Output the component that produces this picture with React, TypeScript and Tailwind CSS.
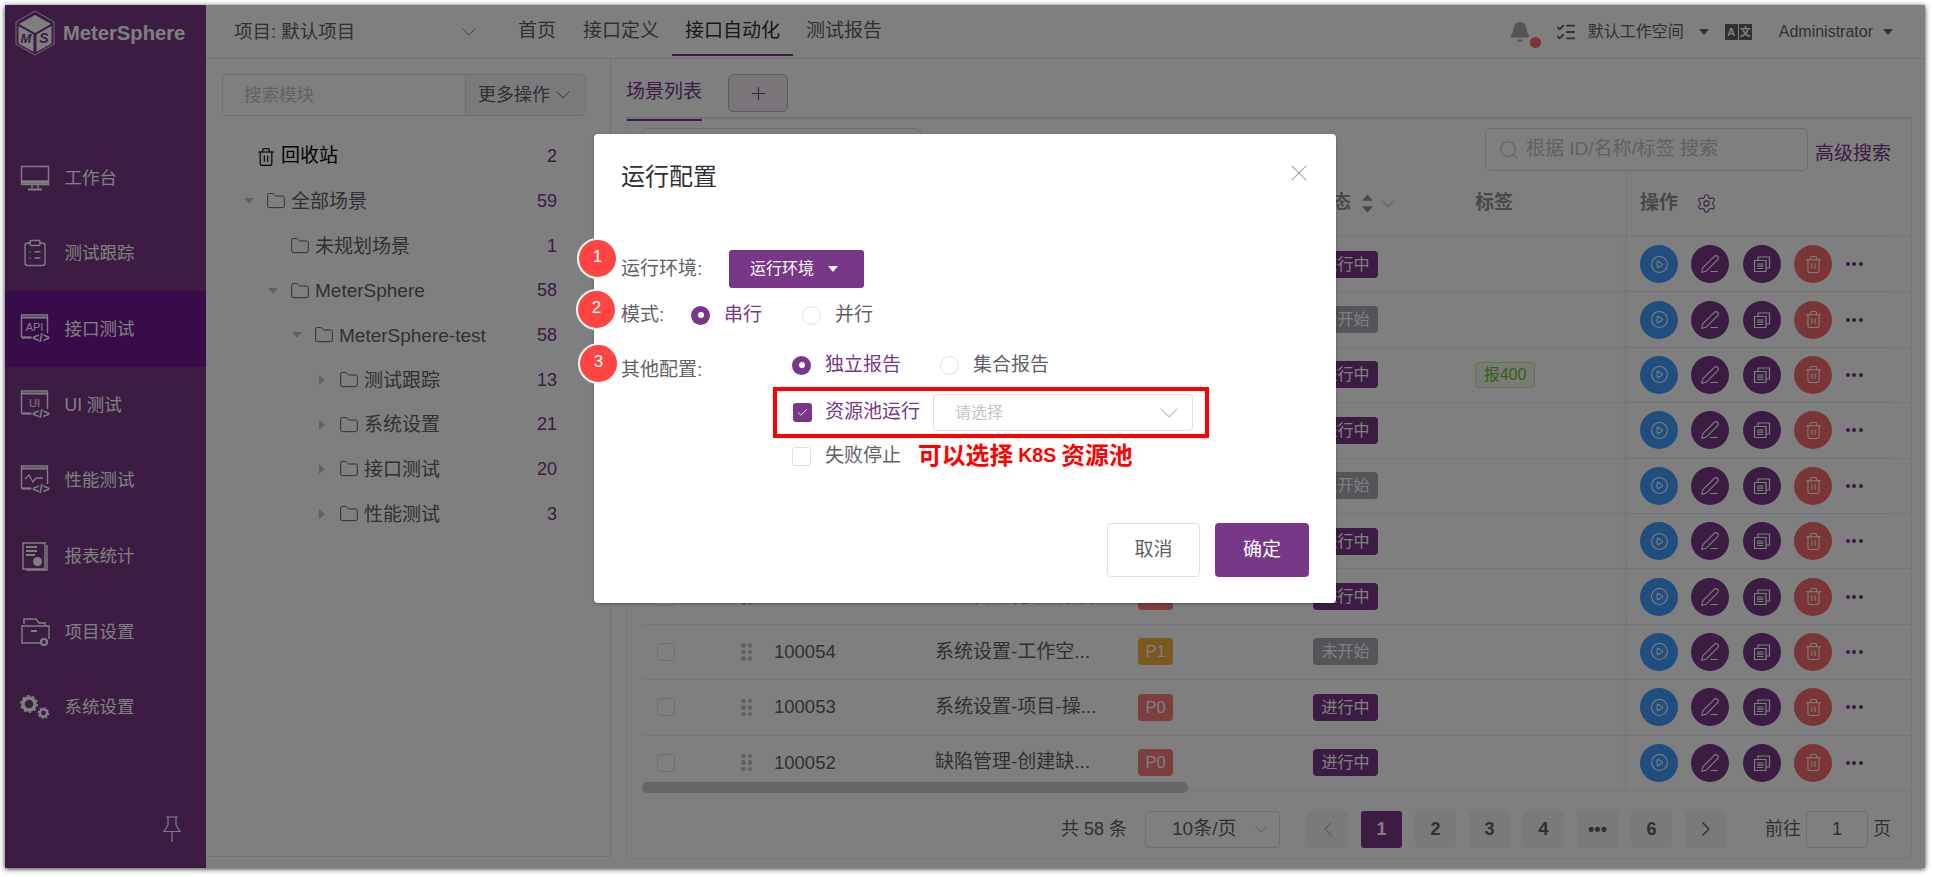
import React from 'react';
import {
  Bell, ChevronDown, ChevronLeft, ChevronRight, CirclePlay, ClipboardList, Folder,
  ListChecks, PenLine, Plus, Search, Settings, Trash2, X, Check,
} from 'lucide-react';

const Caret: React.FC<{ dir?: 'down' | 'right' | 'up'; className?: string }> = ({ dir = 'down', className }) => (
  <svg viewBox="0 0 12 12" className={className} fill="currentColor">
    {dir === 'down' && <path d="M1 3h10L6 9z" />}
    {dir === 'up' && <path d="M1 9h10L6 3z" />}
    {dir === 'right' && <path d="M3 1v10l6-5z" />}
  </svg>
);

const CodeIcon: React.FC<{ label?: string; children?: React.ReactNode }> = ({ label, children }) => (
  <svg viewBox="0 0 30 32" className="w-[30px] h-[32px] text-white" fill="none" stroke="currentColor" strokeWidth="1.4">
    <path d="M1.5 24V2h26v18" />
    <path d="M1.5 4.5h26" strokeWidth="2" />
    <path d="M1.5 24.5h10" strokeWidth="2.2" />
    {label && (
      <text x="14.5" y="17.5" textAnchor="middle" fontSize="11" fill="currentColor" stroke="none" fontFamily="Liberation Sans">{label}</text>
    )}
    {children}
    <text x="21" y="29" textAnchor="middle" fontSize="12" fontWeight="700" fill="currentColor" stroke="none" fontFamily="Liberation Sans">{'</>'}</text>
  </svg>
);

const MonitorIcon = () => (
  <svg viewBox="0 0 30 26" className="w-[30px] h-[26px] text-white" fill="none" stroke="currentColor" strokeWidth="1.4">
    <path d="M1.5 1.5h27v18h-27z" />
    <path d="M1.5 17h27" strokeWidth="3.4" />
    <path d="M12 20v3.5M18 20v3.5" />
    <path d="M8 24.5h14" strokeWidth="2" />
  </svg>
);

const ReportIcon = () => (
  <svg viewBox="0 0 30 30" className="w-[30px] h-[30px] text-white" fill="none" stroke="currentColor" strokeWidth="1.4">
    <path d="M3 2h22v26H3z" />
    <path d="M27 4v25H6" />
    <path d="M6 6h11M6 10h11M6 14h9" strokeWidth="1.8" />
    <circle cx="17.5" cy="20.5" r="4.5" fill="currentColor" stroke="none" />
  </svg>
);

const ProjectIcon = () => (
  <svg viewBox="0 0 30 30" className="w-[30px] h-[30px] text-white" fill="none" stroke="currentColor" strokeWidth="1.4">
    <path d="M4 7V2h12l3 4h6v3" />
    <path d="M22 26H2V9h27v13" />
    <path d="M11 14h6" strokeWidth="2" />
    <circle cx="24" cy="25" r="3" strokeWidth="2.2" />
  </svg>
);

const GearsIcon = () => (
  <svg viewBox="0 0 30 26" className="w-[30px] h-[26px] text-white" fill="none" stroke="currentColor">
    <circle cx="9" cy="10" r="6" strokeWidth="3.4" />
    <circle cx="9" cy="10" r="8.2" strokeWidth="1.6" strokeDasharray="2.6 2.6" />
    <circle cx="23.5" cy="19" r="3.6" strokeWidth="2.4" />
    <circle cx="23.5" cy="19" r="5.2" strokeWidth="1.4" strokeDasharray="2 2" />
  </svg>
);

const PinIcon = () => (
  <svg viewBox="0 0 18 26" className="w-[18px] h-[26px] text-white" fill="none" stroke="currentColor" strokeWidth="1.2">
    <path d="M3 1h12M5 1l-1 0M5 1v8L1 15.5h16L13 9V1" />
    <path d="M9 15.5V26" />
  </svg>
);

const CopyIcon = () => (
  <svg viewBox="0 0 18 18" className="w-[18px] h-[18px]" fill="none" stroke="currentColor" strokeWidth="1.2">
    <path d="M1.5 5.5h11.5v11H1.5z" />
    <path d="M5 5.5V2h11.5v11H13" />
    <path d="M4 9h6.5M4 11.2h6.5M4 13.5h6.5" />
  </svg>
);

const Logo = () => (
  <svg viewBox="0 0 42 46" className="w-[42px] h-[46px]">
    <path d="M21 1l19 11v22L21 45 2 34V12z" fill="none" stroke="#fff" strokeWidth="0.8" />
    <path d="M21 5l16 9-16 9-16-9z" fill="#fff" />
    <path d="M4.5 16l15 8.5V42l-15-8.5z" fill="#fff" />
    <path d="M22.5 24.5l15-8.5v17.5l-15 8.5z" fill="#fff" />
    <text x="12" y="33" textAnchor="middle" fontSize="13" fontWeight="700" fontStyle="italic" fill="#783887" fontFamily="Liberation Sans">M</text>
    <text x="30" y="33" textAnchor="middle" fontSize="14" fontWeight="700" fontStyle="italic" fill="#783887" fontFamily="Liberation Sans">S</text>
  </svg>
);

const navItems = [
  { label: '工作台', icon: <MonitorIcon /> },
  { label: '测试跟踪', icon: <ClipboardList className="w-[34px] h-[34px] text-white" strokeWidth={1.1} /> },
  { label: '接口测试', active: true, icon: <CodeIcon label="API" /> },
  { label: 'UI 测试', icon: <CodeIcon label="UI" /> },
  {
    label: '性能测试',
    icon: (
      <CodeIcon>
        <path d="M5 15l4-4 4 7 3-4h7" strokeWidth="1.3" />
      </CodeIcon>
    ),
  },
  { label: '报表统计', icon: <ReportIcon /> },
  { label: '项目设置', icon: <ProjectIcon /> },
  { label: '系统设置', icon: <GearsIcon /> },
];

const treeRows = [
  { label: '全部场景', count: 59, pad: 'pl-[44px]', arrow: 'down' as const },
  { label: '未规划场景', count: 1, pad: 'pl-[68px]' },
  { label: 'MeterSphere', count: 58, pad: 'pl-[68px]', arrow: 'down' as const },
  { label: 'MeterSphere-test', count: 58, pad: 'pl-[92px]', arrow: 'down' as const },
  { label: '测试跟踪', count: 13, pad: 'pl-[117px]', arrow: 'right' as const },
  { label: '系统设置', count: 21, pad: 'pl-[117px]', arrow: 'right' as const },
  { label: '接口测试', count: 20, pad: 'pl-[117px]', arrow: 'right' as const },
  { label: '性能测试', count: 3, pad: 'pl-[117px]', arrow: 'right' as const },
];

const tableRows = [
  { id: '100061', name: '测试跟踪-用例评审...', level: 'P0', status: '进行中' },
  { id: '100060', name: '测试跟踪-测试计划...', level: 'P0', status: '未开始' },
  { id: '100059', name: '接口测试-接口定义...', level: 'P0', status: '进行中', tag: '报400' },
  { id: '100058', name: '接口测试-场景列表...', level: 'P1', status: '进行中' },
  { id: '100057', name: '性能测试-创建测试...', level: 'P1', status: '未开始' },
  { id: '100056', name: '性能测试-报告列表...', level: 'P0', status: '进行中' },
  { id: '100055', name: '接口自动化-执行设置', level: 'P0', status: '进行中' },
  { id: '100054', name: '系统设置-工作空...', level: 'P1', status: '未开始' },
  { id: '100053', name: '系统设置-项目-操...', level: 'P0', status: '进行中' },
  { id: '100052', name: '缺陷管理-创建缺...', level: 'P0', status: '进行中' },
];

const rowGrid = 'grid grid-cols-[99px_33px_161px_203px_175px_162px_151px_269px] items-center';

const DragHandle = () => (
  <div className="grid grid-cols-2 gap-x-[2px] gap-y-[2px] w-[11px]">
    {[0, 1, 2, 3, 4, 5].map((i) => (
      <span key={i} className="w-[4.5px] h-[4.5px] rounded-full bg-[#c0c4cc]" />
    ))}
  </div>
);

const RowActions = () => (
  <div className="flex items-center gap-[13.4px] pl-[13px] h-full border-l border-[#eceef2] shadow-[-4px_0_6px_rgba(0,0,0,0.03)]">
    <span className="w-[38px] h-[38px] rounded-full bg-[#409eff] flex items-center justify-center text-white">
      <CirclePlay className="w-[19px] h-[19px]" strokeWidth={1.3} />
    </span>
    <span className="w-[38px] h-[38px] rounded-full bg-[#783887] flex items-center justify-center text-white">
      <PenLine className="w-[20px] h-[20px]" strokeWidth={1.3} />
    </span>
    <span className="w-[38px] h-[38px] rounded-full bg-[#783887] flex items-center justify-center text-white">
      <CopyIcon />
    </span>
    <span className="w-[38px] h-[38px] rounded-full bg-[#f56c6c] flex items-center justify-center text-white">
      <Trash2 className="w-[19px] h-[19px]" strokeWidth={1.3} />
    </span>
    <span className="flex gap-[2.5px]">
      <i className="w-[4px] h-[4px] rounded-full bg-[#783887]" />
      <i className="w-[4px] h-[4px] rounded-full bg-[#783887]" />
      <i className="w-[4px] h-[4px] rounded-full bg-[#783887]" />
    </span>
  </div>
);

const Radio: React.FC<{ checked?: boolean; label: string; className?: string }> = ({ checked, label, className }) => (
  <span className={`flex items-center gap-[14px] ${className ?? ''}`}>
    {checked ? (
      <span className="w-[19px] h-[19px] rounded-full bg-[#783887] flex items-center justify-center">
        <span className="w-[6px] h-[6px] rounded-full bg-white" />
      </span>
    ) : (
      <span className="w-[19px] h-[19px] rounded-full border border-[#dcdfe6] bg-white" />
    )}
    <span className={checked ? 'text-[#783887]' : 'text-[#606266]'}>{label}</span>
  </span>
);

const StepBadge: React.FC<{ n: number; className: string }> = ({ n, className }) => (
  <span className={`absolute w-[41px] h-[41px] rounded-full bg-[#ff4444] border-2 border-white text-white text-[17px] flex items-center justify-center pb-[4px] ${className}`}>
    {n}
  </span>
);

const pages = ['1', '2', '3', '4', '•••', '6'];

export default function App() {
  return (
    <div className="w-[1933px] h-[877px] bg-white pl-[5px] pt-[5px] overflow-hidden font-['Liberation_Sans','Noto_Sans_CJK_SC',sans-serif] text-[17.5px] text-[#606266]">
      <div className="relative w-[1920px] h-[863px] flex bg-white shadow-[0_1px_5px_rgba(0,0,0,0.8)]">
        <aside className="w-[201px] shrink-0 flex flex-col bg-[#783887] text-white">
          <div className="h-[135px] flex items-start pl-[9px] pt-[5px] gap-[7px]">
            <Logo />
            <span className="text-[20.2px] font-bold mt-[8px]">MeterSphere</span>
          </div>
          {navItems.map((item) => (
            <div
              key={item.label}
              className={`h-[75.65px] flex items-center pl-[15px] gap-[14.5px] ${item.active ? 'bg-[#701892]' : ''}`}
            >
              <span className="w-[30px] h-[30px] flex items-center justify-center">{item.icon}</span>
              <span>{item.label}</span>
            </div>
          ))}
          <div className="mt-auto pb-[26px] pl-[158px]">
            <PinIcon />
          </div>
        </aside>

        <div className="flex-1 min-w-0 flex flex-col">
          <header className="h-[54px] shrink-0 flex items-center border-b border-[#e6e6e6] pl-[28px] text-[19px]">
            <span className="w-[227px] text-[18.5px]">项目: 默认项目</span>
            <ChevronDown className="w-[24px] h-[24px] text-[#909399] -ml-[4px]" strokeWidth={1} />
            <span className="ml-[37px]">首页</span>
            <span className="ml-[27px]">接口定义</span>
            <span className="relative ml-[26px] text-[#303133]">
              接口自动化
              <span className="absolute -left-[13px] -right-[13px] top-[37px] h-[2px] bg-[#783887]" />
            </span>
            <span className="ml-[26px]">测试报告</span>
            <div className="ml-auto flex items-center pr-[31px] text-[16px]">
              <span className="relative">
                <Bell className="w-[22px] h-[22px] text-[#aaaaaa] fill-[#aaaaaa]" />
                <span className="absolute -right-[10px] top-[16px] w-[11px] h-[11px] rounded-full bg-[#f56c6c]" />
              </span>
              <ListChecks className="ml-[24px] w-[22px] h-[22px] text-[#606266]" strokeWidth={2} />
              <span className="ml-[11px]">默认工作空间</span>
              <Caret className="ml-[14px] w-[12px] h-[12px]" />
              <span className="ml-[15px] flex h-[16px] w-[27px] bg-[#606266] text-white text-[11px] font-bold">
                <span className="flex-1 text-center leading-[16px]">A</span>
                <span className="w-[1px] bg-white" />
                <span className="flex-1 text-center leading-[16px]">文</span>
              </span>
              <span className="ml-[27px]">Administrator</span>
              <Caret className="ml-[9px] w-[12px] h-[12px]" />
            </div>
          </header>

          <div className="flex-1 min-h-0 flex pb-[9px]">
            <section className="w-[405px] shrink-0 border-r border-b border-[#e6e6e6] pt-[15px] pl-[16px] mb-[2px]">
              <div className="w-[364px] h-[42px] flex border border-[#dcdfe6] rounded-[5px]">
                <span className="flex-1 pl-[21px] leading-[40px] text-[#c0c4cc]">搜索模块</span>
                <span className="w-[120px] border-l border-[#dcdfe6] bg-[#f5f7fa] rounded-r-[5px] flex items-center pl-[12px] gap-[1px] text-[18px]">
                  更多操作
                  <ChevronDown className="w-[24px] h-[24px]" strokeWidth={1} />
                </span>
              </div>
              <div className="mt-[18px] w-[335px] text-[19px]">
                <div className="h-[45px] flex items-center pl-[34px] text-black">
                  <Trash2 className="w-[20px] h-[20px]" strokeWidth={1.4} />
                  <span className="ml-[5px]">回收站</span>
                  <span className="ml-auto text-[18px] text-[#783887]">2</span>
                </div>
                {treeRows.map((row) => (
                  <div key={row.label} className={`relative h-[44.7px] flex items-center ${row.pad}`}>
                    {row.arrow && <Caret dir={row.arrow} className="absolute -translate-x-[23px] w-[12px] h-[12px] text-[#c0c4cc]" />}
                    <Folder className="w-[20px] h-[20px]" strokeWidth={1.2} />
                    <span className="ml-[5px] leading-none">{row.label}</span>
                    <span className="ml-auto text-[18px] text-[#783887]">{row.count}</span>
                  </div>
                ))}
              </div>
            </section>

            <section className="flex-1 min-w-0 pl-[15px] pr-[13px]">
              <div className="h-[60px] flex border-b-2 border-[#e4e7ed]">
                <span className="relative h-[60px] w-[76px] shrink-0 flex items-center pt-[6px] text-[19px] text-[#783887]">
                  场景列表
                  <span className="absolute left-0 right-0 bottom-0 h-[2px] bg-[#783887] translate-y-[2px]" />
                </span>
                <span className="ml-[26px] mt-[15px] w-[60px] h-[38px] rounded-[5px] border border-[#c9afcf] bg-[#f2ebf3] flex items-center justify-center text-[#783887]">
                  <Plus className="w-[21px] h-[21px]" strokeWidth={1.2} />
                </span>
              </div>

              <div className="relative h-[740px] border border-t-0 border-[#ebeef5] rounded-b-[5px] pl-[15px]">
                <div className="h-[52px] pt-[9px] flex">
                  <span className="w-[279px] h-[43px] border border-[#dcdfe6] rounded-[5px]" />
                  <span className="ml-[564px] w-[323px] h-[43px] border border-[#dcdfe6] rounded-[5px] flex items-center pl-[12px] gap-[6px] text-[19px] text-[#c0c4cc]">
                    <Search className="w-[22px] h-[22px]" strokeWidth={1.1} />
                    根据 ID/名称/标签 搜索
                  </span>
                  <span className="ml-[7px] mt-[12px] text-[19px] text-[#783887]">高级搜索</span>
                </div>

                <div className={`${rowGrid} h-[66px] border-b border-[#ebeef5] font-bold text-[#909399] text-[19px]`}>
                  <span />
                  <span />
                  <span>ID</span>
                  <span>场景名称</span>
                  <span>用例等级</span>
                  <span className="flex items-center">
                    状态
                    <span className="ml-[8px] flex flex-col -space-y-[1px]">
                      <Caret dir="up" className="w-[17px] h-[13px]" />
                      <Caret className="w-[17px] h-[13px]" />
                    </span>
                    <ChevronDown className="ml-[2px] w-[20px] h-[20px]" strokeWidth={1} />
                  </span>
                  <span>标签</span>
                  <span className="flex items-center gap-[18px] pl-[13px] h-full border-l border-[#eceef2]">
                    操作
                    <Settings className="w-[21px] h-[21px] text-[#783887]" strokeWidth={1.2} />
                  </span>
                </div>

                {tableRows.map((row) => (
                  <div key={row.id} className={`${rowGrid} h-[55.4px] border-b border-[#ebeef5]`}>
                    <span className="pl-[15px]">
                      <span className="block w-[18px] h-[18px] border border-[#dcdfe6] rounded-[3px] bg-white" />
                    </span>
                    <DragHandle />
                    <span className="text-[18.5px]">{row.id}</span>
                    <span className="whitespace-nowrap overflow-hidden text-[19px]">{row.name}</span>
                    <span>
                      <span className={`inline-block w-[35px] h-[27px] rounded-[4px] text-white text-center text-[16.5px] leading-[27px] ${row.level === 'P0' ? 'bg-[#fb7d7d]' : 'bg-[#f8b23f]'}`}>
                        {row.level}
                      </span>
                    </span>
                    <span>
                      <span className={`inline-block w-[65px] h-[27px] rounded-[4px] text-white text-center text-[16px] leading-[27px] ${row.status === '进行中' ? 'bg-[#783887]' : 'bg-[#a9abb2]'}`}>
                        {row.status}
                      </span>
                    </span>
                    <span>
                      {row.tag && (
                        <span className="inline-block w-[60px] h-[26px] rounded-[4px] border border-[#c2e7b0] bg-[#f0f9eb] text-[#67c23a] text-center text-[16px] leading-[24px]">
                          {row.tag}
                        </span>
                      )}
                    </span>
                    <RowActions />
                  </div>
                ))}

                <div className="absolute left-[15px] top-[663px] w-[546px] h-[11px] rounded-full bg-[#cccccc]" />

                <div className="flex items-center h-[37px] mt-[20px] pl-[419px] text-[18px]">
                  <span className="w-[84px]">共 58 条</span>
                  <span className="w-[135px] h-[37px] border border-[#dcdfe6] rounded-[4px] flex items-center pl-[26px] gap-[14px] text-[19px]">
                    10条/页
                    <ChevronDown className="w-[22px] h-[22px] text-[#c0c4cc]" strokeWidth={1.1} />
                  </span>
                  <span className="ml-[27px] w-[41px] h-[37px] rounded-[3px] bg-[#f4f4f5] flex items-center justify-center text-[#c0c4cc]">
                    <ChevronLeft className="w-[24px] h-[24px]" strokeWidth={1.5} />
                  </span>
                  {pages.map((p) => (
                    <span
                      key={p}
                      className={`ml-[13px] w-[41px] h-[37px] rounded-[3px] flex items-center justify-center font-bold text-[18px] ${p === '1' ? 'bg-[#783887] text-white' : 'bg-[#f4f4f5] text-[#606266]'}`}
                    >
                      {p}
                    </span>
                  ))}
                  <span className="ml-[13px] w-[41px] h-[37px] rounded-[3px] bg-[#f4f4f5] flex items-center justify-center">
                    <ChevronRight className="w-[24px] h-[24px]" strokeWidth={1.5} />
                  </span>
                  <span className="ml-[39px]">前往</span>
                  <span className="ml-[5px] w-[62px] h-[37px] border border-[#dcdfe6] rounded-[4px] flex items-center justify-center">1</span>
                  <span className="ml-[5px]">页</span>
                </div>
              </div>
            </section>
          </div>
        </div>

        <div className="absolute inset-0 bg-black/50" />

        <div className="absolute left-[589px] top-[129px] w-[742px] h-[469px] bg-white rounded-[4px] flex flex-col pl-[27px] pr-[27px] pb-[26px] pt-[27px] text-[19px] shadow-[0_1px_3px_rgba(0,0,0,0.3)]">
          <StepBadge n={1} className="-left-[17px] top-[104px]" />
          <StepBadge n={2} className="-left-[18px] top-[155px]" />
          <StepBadge n={3} className="-left-[16px] top-[209px]" />
          <X className="absolute right-[23px] top-[25px] w-[28px] h-[28px] text-[#909399]" strokeWidth={0.9} />

          <h2 className="text-[24px] leading-[32px] text-[#303133]">运行配置</h2>

          <div className="mt-[57px] h-[38px] flex items-center">
            <span className="w-[108px]">运行环境:</span>
            <span className="w-[135px] h-[38px] rounded-[3px] bg-[#783887] text-white text-[16px] flex items-center pl-[21px] gap-[13px]">
              运行环境
              <Caret className="w-[12px] h-[12px]" />
            </span>
          </div>

          <div className="mt-[15px] h-[24px] flex items-center">
            <span className="w-[70px]">模式:</span>
            <Radio checked label="串行" className="w-[111px]" />
            <Radio label="并行" />
          </div>

          <div className="mt-[26px] flex">
            <span className="w-[171px] pt-[3px]">其他配置:</span>
            <div className="flex flex-col">
              <div className="h-[24px] flex items-center">
                <Radio checked label="独立报告" className="w-[148px]" />
                <Radio label="集合报告" />
              </div>
              <div className="mt-[10px] -ml-[19px] w-[436px] h-[51px] border-4 border-[#ff0000] flex items-center pl-[16px]">
                <span className="w-[19px] h-[19px] rounded-[3px] bg-[#783887] flex items-center justify-center text-white">
                  <Check className="w-[13px] h-[13px]" strokeWidth={1.5} />
                </span>
                <span className="ml-[13px] text-[#783887]">资源池运行</span>
                <span className="ml-[13px] w-[260px] h-[37px] border border-[#dcdfe6] rounded-[4px] flex items-center pl-[21px] pr-[7px] justify-between text-[16px] text-[#c0c4cc]">
                  请选择
                  <ChevronDown className="w-[32px] h-[32px]" strokeWidth={0.8} />
                </span>
              </div>
              <div className="mt-[8px] h-[20px] flex items-center">
                <span className="w-[19px] h-[19px] rounded-[3px] border border-[#dcdfe6]" />
                <span className="ml-[14px]">失败停止</span>
                <span className="ml-[17px] text-[#ff0000] font-bold text-[23.8px] flex items-center">
                  可以选择<span className="mx-[5px] text-[19.5px]">K8S</span>资源池
                </span>
              </div>
            </div>
          </div>

          <div className="mt-auto flex justify-end gap-[15px]">
            <span className="w-[93px] h-[54px] rounded-[4px] border border-[#dcdfe6] flex items-center justify-center">取消</span>
            <span className="w-[94px] h-[54px] rounded-[4px] bg-[#783887] text-white flex items-center justify-center">确定</span>
          </div>
        </div>
      </div>
    </div>
  );
}
